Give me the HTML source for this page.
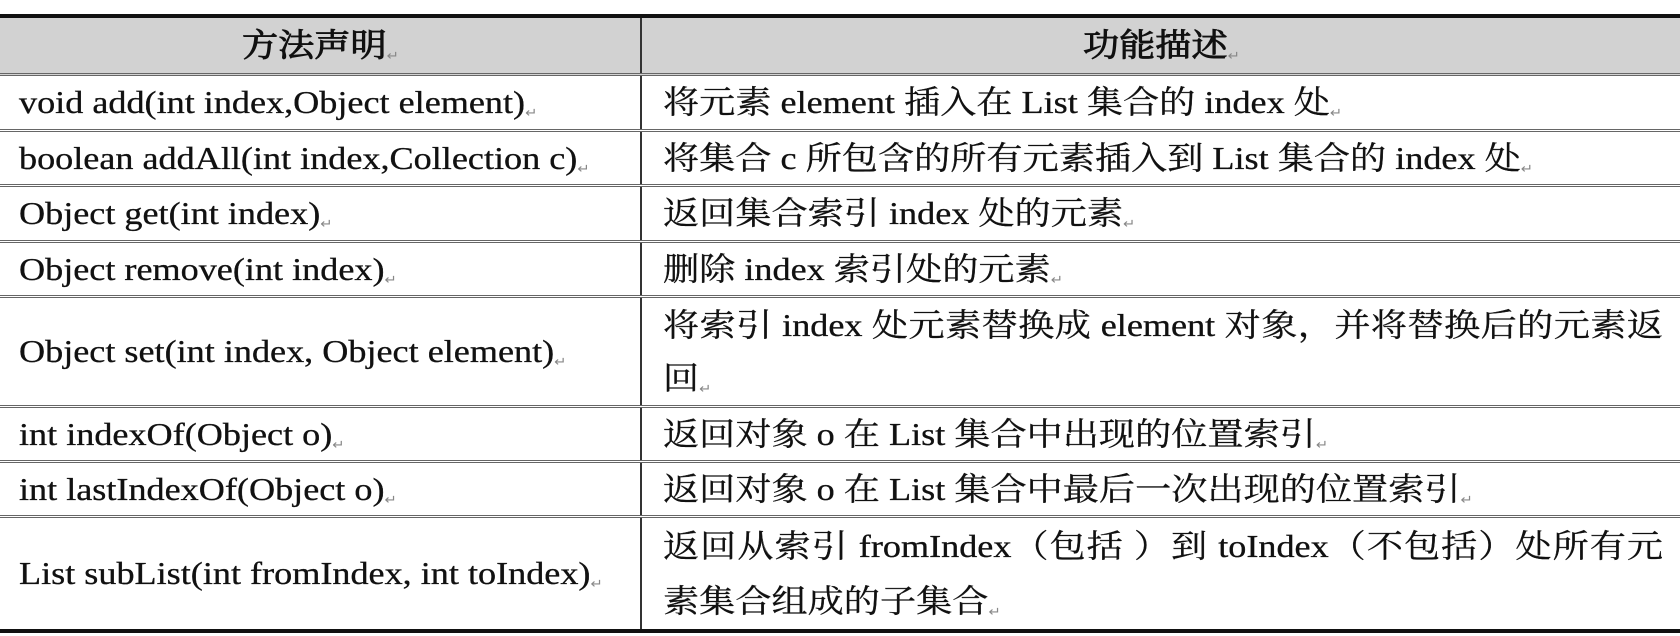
<!DOCTYPE html>
<html><head><meta charset="utf-8"><style>
body{margin:0;width:1680px;height:636px;background:#fff;overflow:hidden;font-family:"Liberation Serif","Noto Serif CJK SC",serif;color:#111}
.t{position:absolute;left:0;top:14px;width:1680px;border-top:4px solid #111;border-bottom:4px solid #111}
.r{display:flex;border-bottom:3px double #666;box-sizing:border-box}
.r:last-child{border-bottom:none}
.c1{width:642px;border-right:2px solid #333;box-sizing:border-box;padding-left:19px;display:flex;align-items:center;font-size:32px;line-height:1.2}
.c2{flex:1;padding-left:21px;display:flex;flex-direction:column;justify-content:center;font-size:32px;line-height:1.2}
.ln{height:55px;display:flex;align-items:center}
.s{display:inline-block;transform:scaleX(1.13);transform-origin:left center;white-space:nowrap;-webkit-text-stroke:0.3px #111;line-height:1.2}
.h{background:#d2d2d2}
.h .c1,.h .c2{align-items:center;justify-content:center;padding:0}
.h .s{transform-origin:center;-webkit-text-stroke:0.9px #111}
.m{font-size:13px;color:#888;vertical-align:-4px;-webkit-text-stroke:0}
.j{display:inline-block;width:885px;text-align:justify;text-align-last:justify}
</style></head><body>
<div class="t">
<div class="r h" style="height:58px"><div class="c1"><span class="s">方法声明<span class="m">↵</span></span></div><div class="c2"><span class="s">功能描述<span class="m">↵</span></span></div></div>
<div class="r" style="height:56px"><div class="c1"><span class="s">void add(int index,Object element)<span class="m">↵</span></span></div><div class="c2"><div class="ln"><span class="s">将元素 element 插入在 List 集合的 index 处<span class="m">↵</span></span></div></div></div>
<div class="r" style="height:55px"><div class="c1"><span class="s">boolean addAll(int index,Collection c)<span class="m">↵</span></span></div><div class="c2"><div class="ln"><span class="s">将集合 c 所包含的所有元素插入到 List 集合的 index 处<span class="m">↵</span></span></div></div></div>
<div class="r" style="height:56px"><div class="c1"><span class="s">Object get(int index)<span class="m">↵</span></span></div><div class="c2"><div class="ln"><span class="s">返回集合索引 index 处的元素<span class="m">↵</span></span></div></div></div>
<div class="r" style="height:55px"><div class="c1"><span class="s">Object remove(int index)<span class="m">↵</span></span></div><div class="c2"><div class="ln"><span class="s">删除 index 索引处的元素<span class="m">↵</span></span></div></div></div>
<div class="r" style="height:110px"><div class="c1"><span class="s">Object set(int index, Object element)<span class="m">↵</span></span></div><div class="c2"><div class="ln"><span class="s j">将索引 index 处元素替换成 element 对象，并将替换后的元素返</span></div><div class="ln"><span class="s">回<span class="m">↵</span></span></div></div></div>
<div class="r" style="height:55px"><div class="c1"><span class="s">int indexOf(Object o)<span class="m">↵</span></span></div><div class="c2"><div class="ln"><span class="s">返回对象 o 在 List 集合中出现的位置索引<span class="m">↵</span></span></div></div></div>
<div class="r" style="height:55px"><div class="c1"><span class="s">int lastIndexOf(Object o)<span class="m">↵</span></span></div><div class="c2"><div class="ln"><span class="s">返回对象 o 在 List 集合中最后一次出现的位置索引<span class="m">↵</span></span></div></div></div>
<div class="r" style="height:111px"><div class="c1"><span class="s">List subList(int fromIndex, int toIndex)<span class="m">↵</span></span></div><div class="c2"><div class="ln"><span class="s j">返回从索引 fromIndex（包括 ）到 toIndex（不包括）处所有元</span></div><div class="ln"><span class="s">素集合组成的子集合<span class="m">↵</span></span></div></div></div>
</div>
</body></html>
